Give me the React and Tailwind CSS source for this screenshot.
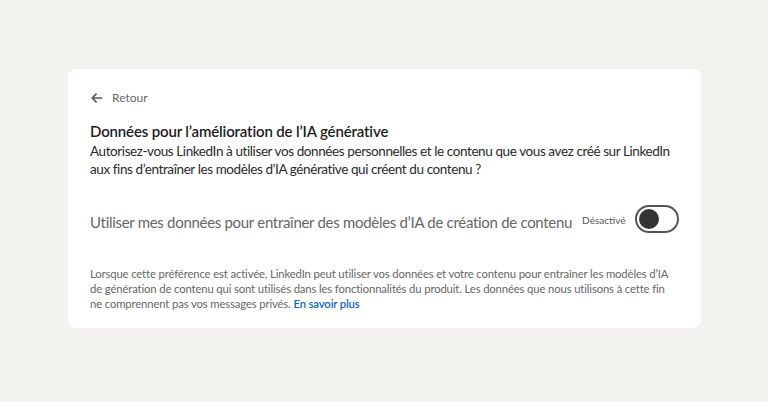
import { useState } from 'react'

export default function App() {
  const [enabled, setEnabled] = useState(false)

  return (
    <div className="w-full h-[402px] bg-[#f3f2ee] pt-[69px] pl-[68px]" style={{ fontFamily: 'Lato, "Open Sans", sans-serif' }}>
      <div className="w-[633px] h-[259px] bg-white rounded-lg px-[22px] pt-[20px]">
        {/* retour */}
        <button className="flex items-center gap-[8px] text-[#666] text-[12px] h-[18px]">
          <svg width="14" height="14" viewBox="0 0 16 16" fill="none" stroke="#555" strokeWidth="1.8">
            <path d="M14 8H2.5M7.5 3L2.5 8l5 5" />
          </svg>
          <span>Retour</span>
        </button>

        <h1 className="mt-[14px] text-[15px] tracking-[-0.01em] font-semibold text-[#1d1d1d] leading-[20px]">
          Données pour l’amélioration de l’IA générative
        </h1>
        <p className="mt-[1px] text-[13.5px] tracking-[-0.03em] text-[#2a2a2a] leading-[18px]">
          Autorisez-vous LinkedIn à utiliser vos données personnelles et le contenu que vous avez créé sur LinkedIn<br />
          aux fins d’entraîner les modèles d’IA générative qui créent du contenu ?
        </p>

        <div className="mt-[27px] flex items-center">
          <span className="whitespace-nowrap text-[15px] tracking-[-0.02em] text-[#666] leading-[20px] pt-[5px]">
            Utiliser mes données pour entraîner des modèles d’IA de création de contenu
          </span>
          <span className="shrink-0 ml-[10px] text-[10px] text-[#555] pt-[2px]">{enabled ? 'Activé' : 'Désactivé'}</span>
          <button
            onClick={() => setEnabled(!enabled)}
            className={`shrink-0 ml-[10px] w-[44px] h-[28px] rounded-full border-2 border-[#555] flex items-center px-[2px] ${enabled ? 'justify-end' : 'justify-start'}`}
          >
            <span className="w-[20px] h-[20px] rounded-full bg-[#333]" />
          </button>
        </div>

        <div className="mt-[33px] text-[11.3px] tracking-[-0.012em] text-[#666] leading-[15px]">
          <p className="whitespace-nowrap">Lorsque cette préférence est activée, LinkedIn peut utiliser vos données et votre contenu pour entraîner les modèles d’IA</p>
          <p className="whitespace-nowrap">de génération de contenu qui sont utilisés dans les fonctionnalités du produit. Les données que nous utilisons à cette fin</p>
          <p className="whitespace-nowrap">
            ne comprennent pas vos messages privés.{' '}
            <a className="text-[#0a66c2] font-semibold">En savoir plus</a>
          </p>
        </div>
      </div>
    </div>
  )
}
